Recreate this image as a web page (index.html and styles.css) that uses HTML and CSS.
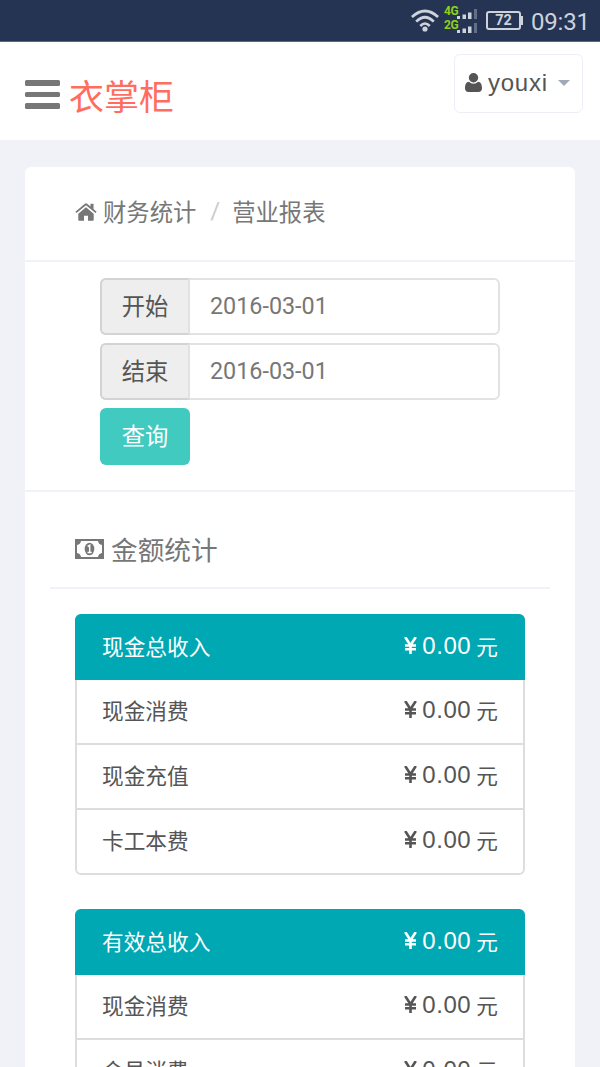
FILE: index.html
```html
<!DOCTYPE html>
<html lang="zh-CN">
<head>
<meta charset="utf-8">
<title>营业报表</title>
<link rel="stylesheet" href="styles.css">
</head>
<body>
<div class="screen">
  <div class="statusbar">
    <svg class="wifi" width="28" height="24" viewBox="0 0 28 24" fill="none" stroke="#cdd2db" stroke-width="2.700"><path d="M.9 8Q14-4 27.1 8M5.200 12.600Q14 4 22.800 12.600M9.300 17Q14 12 18.700 17"/><circle cx="14" cy="20" r="2.600" fill="#cdd2db" stroke="none"/></svg>
    <div class="sims">
      <div class="sim"><span>4G</span><svg width="20" height="10" viewBox="0 0 20 10" fill="#cdd2db"><path d="M0 7h3v3H0zM5.500 5.500h3.500V10h-3.500zM11 3.500h3.500V10H11z"/><path fill="#60708a" d="M17 0h3v10h-3z"/></svg></div>
      <div class="sim"><span>2G</span><svg width="20" height="10" viewBox="0 0 20 10" fill="#cdd2db"><path d="M0 7h3v3H0zM5.500 5.500h3.500V10h-3.500zM11 3.500h3.500V10H11z"/><path fill="#60708a" d="M17 0h3v10h-3z"/></svg></div>
    </div>
    <div class="battery">72</div>
    <div class="clock">09:31</div>
  </div>
  <header class="header">
    <div class="toggle"><i></i><i></i><i></i></div>
    <div class="brand">衣掌柜</div>
    <div class="user">
      <svg width="17" height="19" viewBox="0 0 17 19" fill="#555"><circle cx="8.500" cy="4.800" r="4.700"/><path d="M4 8.700c-3 0-4 3.300-4 6.500C0 17.500 1.300 19 3.500 19h10c2.200 0 3.500-1.500 3.500-3.800 0-3.200-1-6.500-4-6.500-1.200 1.200-2.700 2-4.500 2s-3.300-.8-4.500-2z"/></svg>
      <span>youxi</span><b class="caret"></b>
    </div>
  </header>
  <main class="card">
    <nav class="crumbs">
      <svg width="22" height="18" viewBox="0 0 22 18" fill="#777"><path d="M11 4.300 3.300 10.800V17q0 .8.8.8H9v-5h4v5h4.900q.8 0 .8-.8v-6.200z"/><path d="M.4 8.700 9.900.7q1.100-.9 2.200 0L15.500 3.600V.8h3V6.100l3.100 2.600-1.100 1.300L11 2.200 1.500 10z"/></svg>
      <span>财务统计</span><em>/</em><span>营业报表</span>
    </nav>
    <section class="filter">
      <div class="field"><label>开始</label><div class="value">2016-03-01</div></div>
      <div class="field"><label>结束</label><div class="value">2016-03-01</div></div>
      <button class="query">查询</button>
    </section>
    <section class="stats">
      <h2 class="title">
        <svg width="29" height="20" viewBox="0 0 29 20"><path fill="#777" fill-rule="evenodd" d="M0 0h29v20H0zM6 2Q5.500 5.500 2 6v8q3.500.5 4 4h17q.5-3.500 4-4V6q-3.500-.5-4-4z"/><ellipse cx="14.500" cy="10" rx="4.800" ry="6.300" fill="#777"/><path d="M12.700 7.500 14.700 6.300v7M12.500 13.500h4.200" fill="none" stroke="#fff" stroke-width="1.500"/></svg>
        <span>金额统计</span>
      </h2>
      <div class="list">
        <div class="row head"><span>现金总收入</span><span class="amount"><svg class="yen" viewBox="0 0 13 17"><path d="M1.200 0l5.300 8.300L11.800 0M6.500 8v9M1 8.500h11M1 12.300h11"/></svg><span>0.00</span><span>元</span></span></div>
        <div class="row"><span>现金消费</span><span class="amount"><svg class="yen" viewBox="0 0 13 17"><path d="M1.200 0l5.300 8.300L11.800 0M6.500 8v9M1 8.500h11M1 12.300h11"/></svg><span>0.00</span><span>元</span></span></div>
        <div class="row"><span>现金充值</span><span class="amount"><svg class="yen" viewBox="0 0 13 17"><path d="M1.200 0l5.300 8.300L11.800 0M6.500 8v9M1 8.500h11M1 12.300h11"/></svg><span>0.00</span><span>元</span></span></div>
        <div class="row"><span>卡工本费</span><span class="amount"><svg class="yen" viewBox="0 0 13 17"><path d="M1.200 0l5.300 8.300L11.800 0M6.500 8v9M1 8.500h11M1 12.300h11"/></svg><span>0.00</span><span>元</span></span></div>
      </div>
      <div class="list">
        <div class="row head"><span>有效总收入</span><span class="amount"><svg class="yen" viewBox="0 0 13 17"><path d="M1.200 0l5.300 8.300L11.800 0M6.500 8v9M1 8.500h11M1 12.300h11"/></svg><span>0.00</span><span>元</span></span></div>
        <div class="row"><span>现金消费</span><span class="amount"><svg class="yen" viewBox="0 0 13 17"><path d="M1.200 0l5.300 8.300L11.800 0M6.500 8v9M1 8.500h11M1 12.300h11"/></svg><span>0.00</span><span>元</span></span></div>
        <div class="row"><span>会员消费</span><span class="amount"><svg class="yen" viewBox="0 0 13 17"><path d="M1.200 0l5.300 8.300L11.800 0M6.500 8v9M1 8.500h11M1 12.300h11"/></svg><span>0.00</span><span>元</span></span></div>
      </div>
    </section>
  </main>
</div>
</body>
</html>
```
FILE: styles.css
```css
* { box-sizing: border-box; }
body { margin: 0; background: #f1f2f7; color: #555; font-family: "Noto Sans CJK SC", sans-serif; }
svg { display: block; flex: none; }
.screen { height: 1067px; overflow: hidden; }
.statusbar { height: 42px; background: #263453; border-bottom: 1px solid #5b6680; display: flex; align-items: center; padding-left: 410px; color: #cdd2db; font-family: Roboto, sans-serif; }
.wifi { margin-left: 1px; }
.sims { width: 33px; margin-left: 5px; display: flex; flex-direction: column; gap: 4px; }
.sim { display: flex; height: 10px; align-items: flex-start; }
.sim span { width: 13px; font-size: 12px; line-height: 4px; font-weight: 700; color: #8fd01a; letter-spacing: -.4px; }
.battery { position: relative; width: 35px; height: 19px; margin-left: 9px; border: 2px solid #cdd2db; border-radius: 3px; font-size: 14.500px; line-height: 15px; font-weight: 700; text-align: center; }
.battery::after { content: ""; position: absolute; right: -4px; top: 3px; width: 2px; height: 9px; background: #cdd2db; }
.clock { margin-left: 10px; font-size: 24px; line-height: 40px; letter-spacing: -.2px; padding-top: 3px; }
.header { height: 98px; background: #fff; display: flex; align-items: flex-start; padding: 12px 17px 0 25px; }
.toggle { width: 35px; margin-top: 26px; display: flex; flex-direction: column; gap: 6px; }
.toggle i { height: 5.500px; background: #777; border-radius: 1.500px; }
.brand { margin: 13px 0 0 9px; font-size: 35px; line-height: 56px; color: #ff6c60; }
.user { margin-left: auto; width: 129px; height: 59px; border: 1.500px solid #eeeef7; border-radius: 6px; display: flex; align-items: center; padding: 0 0 2px 10px; font: 24px/54px "Liberation Sans", sans-serif; }
.user span { margin-left: 6px; letter-spacing: .750px; }
.caret { margin-left: 10px; border: 6px solid transparent; border-top-color: #a1a9b9; border-bottom: 0; }
.card { margin: 27px 25px 0; height: 920px; background: #fff; border-radius: 6px; }
.crumbs { height: 95px; border-bottom: 2px solid #f1f2f7; padding: 0 0 4px 50px; display: flex; align-items: center; font-size: 23.330px; line-height: 35px; color: #777; }
.crumbs span { margin-left: 6px; }
.crumbs em { font: 24px/35px Roboto, sans-serif; color: #ccc; margin: 0 6px 0 14px; }
.filter { height: 230px; border-bottom: 2px solid #f1f2f7; padding: 16px 75px 0; display: flex; flex-direction: column; align-items: stretch; gap: 8px; }
.field { height: 57px; display: flex; border: 2px solid #e2e2e4; border-radius: 6px; }
.field label { width: 90px; margin: -2px 0 -2px -2px; border: 2px solid #d3d3d3; border-right-color: #e2e2e4; border-radius: 6px 0 0 6px; background: #eee; font-size: 23.330px; line-height: 50px; text-align: center; }
.value { padding-left: 20px; font: 23.330px/52px Roboto, sans-serif; color: #777; }
.query { width: 90px; height: 57px; border: 0; border-radius: 6px; padding: 0 0 3px; background: #41cac0; color: #fff; font: 23.330px/52px "Noto Sans CJK SC", sans-serif; }
.stats { padding: 0 25px; }
.title { height: 97px; margin: 0; border-bottom: 2px solid #eff2f7; padding: 19px 0 0 25px; display: flex; align-items: center; font-size: 26.670px; line-height: 36px; font-weight: 400; color: #777; }
.title span { margin: -1px 0 0 7px; }
.list { margin: 25px 25px 34px; border: 2px solid #ddd; border-radius: 6px; }
.row { height: 65px; padding: 0 25px 3px; display: flex; align-items: center; justify-content: space-between; border-bottom: 2px solid #ddd; font-size: 21.670px; line-height: 32px; }
.row:last-child { border-bottom: 0; height: 63px; }
.head { height: 66px; margin: -2px -2px 0; padding: 0 27px 2px; background: #00a8b3; color: #fff; border: 0; border-radius: 6px 6px 0 0; }
.amount { display: flex; align-items: center; }
.amount > span:nth-child(2) { font: 24px/32px "Liberation Sans", sans-serif; letter-spacing: .600px; margin: 0 5px 0 5px; }
.yen { width: 13px; height: 17px; fill: none; stroke: currentColor; stroke-width: 2.600; margin-top: -2px; }
```
